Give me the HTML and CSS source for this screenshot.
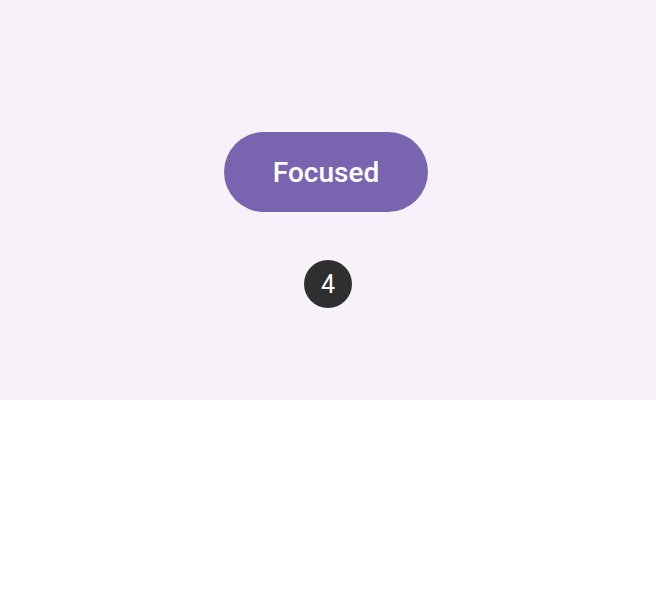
FILE: index.html
```html
<!DOCTYPE html>
<html>
<head>
<meta charset="utf-8">
<link rel="stylesheet" href="styles.css">
</head>
<body>
<div class="stage">
  <button class="pill">Focused</button>
  <div class="badge">4</div>
</div>
</body>
</html>
```
FILE: styles.css
```css
html, body {
  margin: 0;
  padding: 0;
  background: #ffffff;
}
.stage {
  height: 400px;
  box-sizing: border-box;
  padding-top: 132px;
  background: #f7f1f9;
  display: flex;
  flex-direction: column;
  align-items: center;
  gap: 48px;
  font-family: Roboto, "Noto Sans", sans-serif;
}
.pill {
  width: 204px;
  height: 80px;
  margin: 0 4px 0 0;
  border: none;
  border-radius: 40px;
  background: #7965af;
  color: #ffffff;
  font-family: Roboto, sans-serif;
  font-weight: 500;
  font-size: 28px;
  padding: 0;
}
.badge {
  width: 48px;
  height: 48px;
  border-radius: 50%;
  background: #2f2f2f;
  color: #ffffff;
  font-size: 25px;
  display: flex;
  align-items: center;
  justify-content: center;
}
```
